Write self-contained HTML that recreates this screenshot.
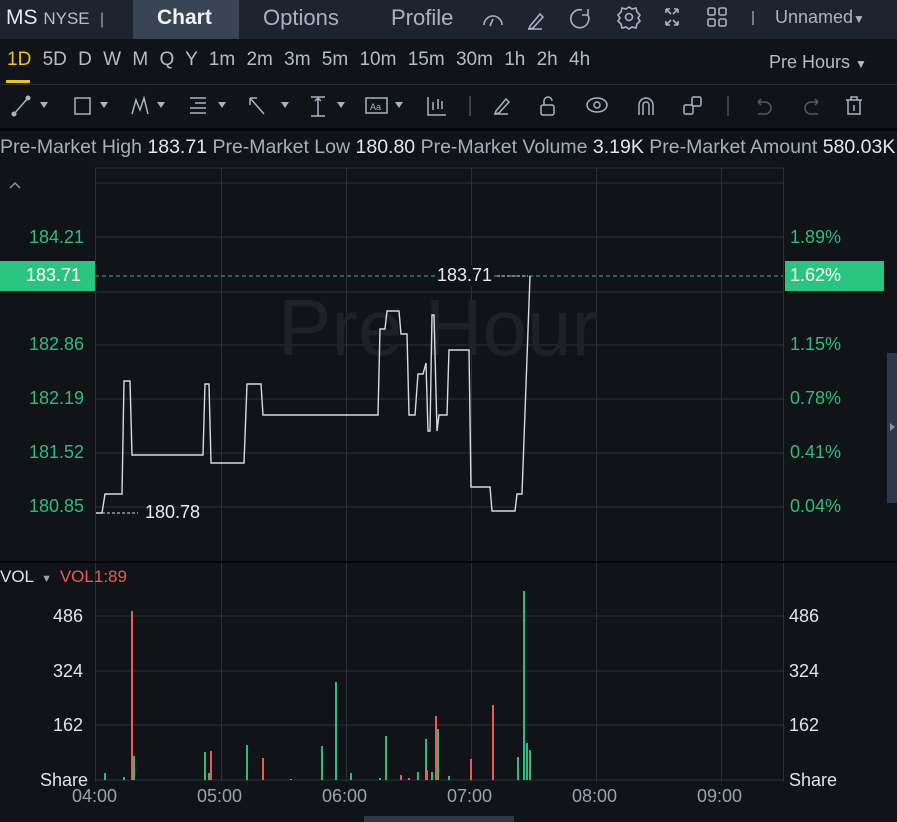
<!DOCTYPE html>
<html><head><meta charset="utf-8"><style>
*{margin:0;padding:0;box-sizing:border-box}
body{width:897px;height:822px;background:#101318;font-family:"Liberation Sans",sans-serif;color:#c9ced6;position:relative;overflow:hidden}
.a{position:absolute;white-space:nowrap}
.top{left:0;top:0;width:897px;height:39px;background:#1e2330}
.g{color:#2dbd7e}
</style></head><body>
<div class="a top"></div>
<div class="a" style="left:133px;top:0;width:106px;height:39px;background:#394454"></div>
<div class="a" style="left:6px;top:6px;font-size:21px;color:#e6e9ee">MS <span style="font-size:17px;color:#b8bec8">NYSE</span> <span style="font-size:16px;color:#9aa2ae">&nbsp;|</span></div>
<div class="a" style="left:157px;top:6px;font-size:21px;font-weight:bold;color:#f1f3f6">Chart</div>
<div class="a" style="left:263px;top:5px;font-size:22px;color:#aab2bf">Options</div>
<div class="a" style="left:391px;top:5px;font-size:22px;color:#aab2bf">Profile</div>
<svg class="a" style="left:470px;top:0" width="440" height="39" fill="none" stroke="#aab2bf" stroke-width="1.6">
<path d="M14 25a9 9 0 1 1 18 0M20 26l3-7"/>
<path d="M58 29h14M60 26l10-12 3 3-10 11-4 1z"/>
<path d="M112 10a9 9 0 1 0 6 5M118 9v6h-6"/>
<circle cx="159" cy="17" r="3.5"/><path d="M159 7l3 2 4-1 1 4 3 3-2 3 2 3-3 3-1 4-4-1-3 2-3-2-4 1-1-4-3-3 2-3-2-3 3-3 1-4 4 1z"/>
<path d="M196 9h4M196 9v4M208 9h-4M208 9v4M196 25h4M196 25v-4M208 25h-4M208 25v-4M197 10l4 4M207 10l-4 4M197 24l4-4M207 24l-4-4"/>
<rect x="238" y="8" width="7" height="7" rx="1.5"/><rect x="249" y="8" width="7" height="7" rx="1.5"/><rect x="238" y="19" width="7" height="7" rx="1.5"/><rect x="249" y="19" width="7" height="7" rx="1.5"/>
<path d="M283 11v14" stroke="#8a919c"/>
</svg>
<div class="a" style="left:775px;top:7px;font-size:18px;color:#aab2bf">Unnamed<span style="font-size:12px">▼</span></div>

<div class="a" style="left:0;top:39px;width:897px;height:46px;background:#101318;border-bottom:1px solid #2a303b"></div>
<div class="a" style="left:7px;top:49px;font-size:19px;color:#b6bcc6;word-spacing:6px"><span style="color:#f0c419">1D</span> 5D D W M Q Y 1m 2m 3m 5m 10m 15m 30m 1h 2h 4h</div>
<div class="a" style="left:6px;top:80px;width:24px;height:3px;background:#f0c419"></div>
<div class="a" style="left:769px;top:52px;font-size:18px;color:#b6bcc6">Pre Hours <span style="font-size:12px">▼</span></div>

<svg class="a" style="left:0;top:86px" width="897" height="42" fill="none" stroke="#aab2bf" stroke-width="1.5">
<path d="M14 28l14-16"/><circle cx="14" cy="28" r="1.8" fill="#aab2bf"/><circle cx="28" cy="12" r="1.8" fill="#aab2bf"/>
<path d="M40 16l4 6 4-6z" fill="#aab2bf" stroke="none"/>
<rect x="75" y="12" width="15" height="16"/>
<path d="M100 16l4 6 4-6z" fill="#aab2bf" stroke="none"/>
<path d="M132 28l4-14 4 10 4-12 4 16"/>
<path d="M157 16l4 6 4-6z" fill="#aab2bf" stroke="none"/>
<path d="M190 12h16M195 17h11M190 22h16M190 27h16"/>
<path d="M218 16l4 6 4-6z" fill="#aab2bf" stroke="none"/>
<path d="M250 12l14 16M250 12h7M250 12v7"/>
<path d="M281 16l4 6 4-6z" fill="#aab2bf" stroke="none"/>
<path d="M311 11h14M311 30h14M318 11v19M315 15l3-3 3 3"/>
<path d="M337 16l4 6 4-6z" fill="#aab2bf" stroke="none"/>
<rect x="366" y="12" width="21" height="15"/>
<text x="370" y="24" font-size="9" fill="#aab2bf" stroke="none" font-family="Liberation Sans">Aa</text>
<path d="M395 16l4 6 4-6z" fill="#aab2bf" stroke="none"/>
<path d="M428 11v18h18M433 16v8M438 13v10M442 15v8"/>
<path d="M470 10v20" stroke="#4a515c"/>
<path d="M494 28h14M496 25l10-12 3 3-10 11-4 1z"/>
<rect x="541" y="19" width="13" height="10" rx="2"/><path d="M544 19v-4a4 4 0 0 1 8 0"/>
<path d="M587 19a10 7 0 0 1 20 0a10 7 0 0 1-20 0"/><circle cx="597" cy="19" r="3"/>
<path d="M639 29V19a7 7 0 0 1 14 0v10M643 29V19a3 3 0 0 1 6 0v10"/>
<rect x="684" y="19" width="9" height="9" rx="1.5"/><rect x="692" y="11" width="9" height="9" rx="1.5"/>
<path d="M728 10v20" stroke="#4a515c"/>
<path d="M758 16h7a6 6 0 0 1 0 12h-7M758 16l3-3M758 16l3 3" stroke="#545b66"/>
<path d="M818 16h-7a6 6 0 0 0 0 12h7M818 16l-3-3M818 16l-3 3" stroke="#545b66"/>
<path d="M846 14h16M851 14v-3h6v3M848 14v14h12V14M854 19v6"/>
</svg>
<div class="a" style="left:0;top:128px;width:897px;height:3px;background:#05060a"></div>
<div class="a" style="left:0;top:136px;font-size:19.5px;color:#a7aeb9">Pre-Market High <span style="color:#e3e6eb">183.71</span> Pre-Market Low <span style="color:#e3e6eb">180.80</span> Pre-Market Volume <span style="color:#e3e6eb">3.19K</span> Pre-Market Amount <span style="color:#e3e6eb">580.03K</span></div>

<svg class="a" style="left:0;top:0" width="897" height="822">
<g stroke="#2b313c" stroke-width="1">
<path d="M95 168H783M95 183H783M95 237H783M95 292H783M95 345H783M95 399H783M95 453H783M95 507H783"/>
<path d="M95.5 168V782M221.5 168V782M346.5 168V782M471.5 168V782M596.5 168V782M721.5 168V782M783.5 168V782"/>
<path d="M0 562H897" stroke="#05060a" stroke-width="2"/>
<path d="M95 616H783M95 671H783M95 725H783M95 780H783"/>
</g>
<text x="278" y="355" font-size="80" fill="#1e2228" font-family="Liberation Sans">Pre Hour</text>
<path d="M10 188l5-5 5 5" stroke="#8a91a0" fill="none" stroke-width="1.5"/>
<path d="M95 276H783" stroke="#2dbd7e" stroke-dasharray="4 3"/>
<polyline fill="none" stroke="#d8dade" stroke-width="1.4" points="96,513 102,513 105,494 122,494 124,381 130,381 132,455 203,455 205,384 209,384 211,463 244,463 247,384 261,384 263,415 378,415 380,329 385,329 387,311 399,311 401,334 407,334 409,415 415,415 418,374 423,374 426,363 428,431 430,431 432,315 434,315 437,431 439,415 447,415 449,350 469,350 471,487 490,487 492,511 515,511 517,494 522,494 530,276"/>
<path d="M102 513H138" stroke="#d8dade" stroke-dasharray="3 2"/>
<path d="M497 276H528" stroke="#d8dade" stroke-dasharray="3 2"/>
<g stroke-width="2">
<g stroke="#2dbd7e"><path d="M105 780V773M124 780V777M134 780V756M205 780V752M209 780V773M247 780V745M291 780V779M322 780V746M336 780V682M351 780V773M380 780V778M386 780V736M418 780V772M426 780V739M432 780V772M438 780V729M449 780V776M518 780V757M524 780V591M527 780V743M530 780V750"/></g>
<g stroke="#ee5a52"><path d="M132 780V611M211 780V751M263 780V758M401 780V775M409 780V778M427 780V770M436 780V716M471 780V759M493 780V705"/></g>
</g>
</svg>
<div class="a" style="left:0;top:261px;width:95px;height:30px;background:#29c580"></div>
<div class="a" style="left:785px;top:261px;width:99px;height:30px;background:#29c580"></div>
<div class="a" style="left:887px;top:353px;width:10px;height:150px;background:#2f3848"></div>
<div class="a" style="left:890px;top:423px;width:0;height:0;border-left:5px solid #8a93a2;border-top:4px solid transparent;border-bottom:4px solid transparent"></div>
<div class="a g" style="left:29px;top:227px;font-size:18px">184.21</div>
<div class="a" style="left:26px;top:265px;font-size:18px;color:#fff">183.71</div>
<div class="a g" style="left:29px;top:334px;font-size:18px">182.86</div>
<div class="a g" style="left:29px;top:388px;font-size:18px">182.19</div>
<div class="a g" style="left:29px;top:442px;font-size:18px">181.52</div>
<div class="a g" style="left:29px;top:496px;font-size:18px">180.85</div>
<div class="a g" style="left:790px;top:227px;font-size:18px">1.89%</div>
<div class="a" style="left:790px;top:265px;font-size:18px;color:#fff">1.62%</div>
<div class="a g" style="left:790px;top:334px;font-size:18px">1.15%</div>
<div class="a g" style="left:790px;top:388px;font-size:18px">0.78%</div>
<div class="a g" style="left:790px;top:442px;font-size:18px">0.41%</div>
<div class="a g" style="left:790px;top:496px;font-size:18px">0.04%</div>
<div class="a" style="left:437px;top:265px;font-size:18px;color:#e8eaee;background:#101318">183.71</div>
<div class="a" style="left:145px;top:502px;font-size:18px;color:#e8eaee">180.78</div>
<div class="a" style="left:0;top:567px;font-size:17px;color:#e0e3e8">VOL <span style="font-size:11px;color:#9aa2ae">&nbsp;▼&nbsp;</span> <span style="color:#ee5a52">VOL1:89</span></div>
<div class="a" style="left:53px;top:606px;font-size:18px;color:#e0e3e8">486</div>
<div class="a" style="left:53px;top:661px;font-size:18px;color:#e0e3e8">324</div>
<div class="a" style="left:53px;top:715px;font-size:18px;color:#e0e3e8">162</div>
<div class="a" style="left:40px;top:770px;font-size:18px;color:#e0e3e8">Share</div>
<div class="a" style="left:789px;top:606px;font-size:18px;color:#e0e3e8">486</div>
<div class="a" style="left:789px;top:661px;font-size:18px;color:#e0e3e8">324</div>
<div class="a" style="left:789px;top:715px;font-size:18px;color:#e0e3e8">162</div>
<div class="a" style="left:789px;top:770px;font-size:18px;color:#e0e3e8">Share</div>
<div class="a" style="left:72px;top:786px;font-size:18px;color:#9aa2ae">04:00</div>
<div class="a" style="left:197px;top:786px;font-size:18px;color:#9aa2ae">05:00</div>
<div class="a" style="left:322px;top:786px;font-size:18px;color:#9aa2ae">06:00</div>
<div class="a" style="left:447px;top:786px;font-size:18px;color:#9aa2ae">07:00</div>
<div class="a" style="left:572px;top:786px;font-size:18px;color:#9aa2ae">08:00</div>
<div class="a" style="left:697px;top:786px;font-size:18px;color:#9aa2ae">09:00</div>
<div class="a" style="left:364px;top:816px;width:150px;height:6px;background:#2f3848"></div>
</body></html>
